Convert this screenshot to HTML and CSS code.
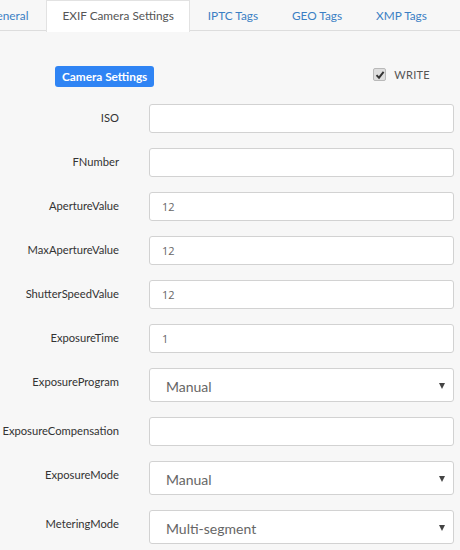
FILE: index.html
```html
<!DOCTYPE html>
<html>
<head>
<meta charset="utf-8">
<link rel="stylesheet" href="styles.css">
</head>
<body>
<ul class="tabs">
  <li class="tab">General</li>
  <li class="tab active">EXIF Camera Settings</li>
  <li class="tab">IPTC Tags</li>
  <li class="tab">GEO Tags</li>
  <li class="tab">XMP Tags</li>
</ul>
<div class="panel">
  <div class="header">
    <span class="badge">Camera Settings</span>
    <label class="write"><span class="check"><svg width="10" height="10" viewBox="0 0 10 10"><path d="M1.5 5.2 L4 7.7 L8.6 1.8" fill="none" stroke="#333" stroke-width="1.9"/></svg></span>WRITE</label>
  </div>
  <form class="fields">
    <label class="lbl">ISO</label><input class="ctl" value="">
    <label class="lbl">FNumber</label><input class="ctl" value="">
    <label class="lbl">ApertureValue</label><input class="ctl" value="12">
    <label class="lbl">MaxApertureValue</label><input class="ctl" value="12">
    <label class="lbl">ShutterSpeedValue</label><input class="ctl" value="12">
    <label class="lbl">ExposureTime</label><input class="ctl" value="1">
    <label class="lbl">ExposureProgram</label><div class="sel"><select><option>Manual</option></select></div>
    <label class="lbl">ExposureCompensation</label><input class="ctl" value="">
    <label class="lbl">ExposureMode</label><div class="sel"><select><option>Manual</option></select></div>
    <label class="lbl">MeteringMode</label><div class="sel"><select><option>Multi-segment</option></select></div>
  </form>
</div>
</body>
</html>
```
FILE: styles.css
```css
html, body {
  margin: 0;
  padding: 0;
  background: #f7f7f7;
  font-family: Lato, "Open Sans", sans-serif;
  overflow: hidden;
}
.tabs {
  list-style: none;
  margin: 0 0 0 -28px;
  padding: 0;
  display: flex;
  height: 30px;
  border-bottom: 1px solid #dddddd;
}
.tab {
  padding: 0 15px;
  margin-right: 2px;
  font-size: 11.8px;
  line-height: 30px;
  color: #3b7fc4;
  border: 1px solid transparent;
  border-bottom: none;
  white-space: nowrap;
}
.tab.active {
  background: #ffffff;
  color: #555555;
  border-color: #e2e2e2;
  height: 31px;
}
.panel {
  padding: 35px 6px 0 0;
}
.header {
  display: flex;
  align-items: center;
  justify-content: space-between;
  height: 21px;
  padding-left: 55px;
  padding-right: 30px;
  margin-bottom: 17px;
}
.badge {
  background: #2f84f4;
  color: #fff;
  font-weight: bold;
  font-size: 11.8px;
  line-height: 21px;
  padding: 0 7px;
  border-radius: 3px;
}
.write {
  display: flex;
  align-items: center;
  gap: 8px;
  font-size: 11px;
  color: #555;
  letter-spacing: 0.3px;
  margin-top: -4px;
  margin-right: -6px;
}
.check {
  width: 11px;
  height: 11px;
  border: 1px solid #b9b9b9;
  background: #dedede;
  border-radius: 2px;
  display: flex;
  align-items: center;
  justify-content: center;
}
.fields {
  display: grid;
  grid-template-columns: 119px 1fr;
  column-gap: 30px;
  row-gap: 15px;
  margin: 0;
}
.lbl {
  text-align: right;
  font-size: 11.2px;
  line-height: 16px;
  padding-top: 6px;
  color: #333;
  white-space: nowrap;
}
.ctl {
  box-sizing: border-box;
  height: 29px;
  width: 100%;
  border: 1px solid #d2d2d2;
  border-radius: 3px;
  background: #fff;
  padding: 0 12px;
  font-family: "Open Sans", sans-serif;
  font-size: 11px;
  color: #666;
  outline: none;
}
.sel {
  position: relative;
}
.sel select {
  -webkit-appearance: none;
  appearance: none;
  box-sizing: border-box;
  width: 100%;
  height: 34px;
  border: 1px solid #d2d2d2;
  border-radius: 3px;
  background: #fff;
  padding: 3px 16px 0;
  font-family: Lato, sans-serif;
  font-size: 14px;
  color: #666;
  outline: none;
}
.sel::after {
  content: "";
  position: absolute;
  right: 9px;
  top: 15px;
  border-left: 3px solid transparent;
  border-right: 3px solid transparent;
  border-top: 6px solid #444;
  pointer-events: none;
}
```
